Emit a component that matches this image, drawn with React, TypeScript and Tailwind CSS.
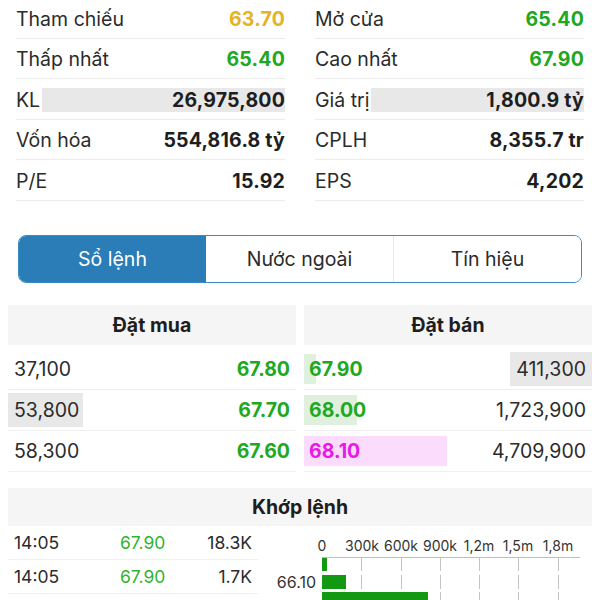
import React from "react";

const FONT = { fontFamily: "Inter, 'Noto Sans', sans-serif" };

type Stat = { label: string; value: string; color?: string; bar?: boolean };

const left: Stat[] = [
  { label: "Tham chiếu", value: "63.70", color: "text-[#e5b225]" },
  { label: "Thấp nhất", value: "65.40", color: "text-[#21a821]" },
  { label: "KL", value: "26,975,800", bar: true },
  { label: "Vốn hóa", value: "554,816.8 tỷ" },
  { label: "P/E", value: "15.92" },
];
const right: Stat[] = [
  { label: "Mở cửa", value: "65.40", color: "text-[#21a821]" },
  { label: "Cao nhất", value: "67.90", color: "text-[#21a821]" },
  { label: "Giá trị", value: "1,800.9 tỷ", bar: true },
  { label: "CPLH", value: "8,355.7 tr" },
  { label: "EPS", value: "4,202" },
];

function StatCol({ items }: { items: Stat[] }) {
  return (
    <div className="flex flex-col">
      {items.map((s) => (
        <div key={s.label} className="flex h-[40.6px] items-center border-b border-[#ececec]">
          <span className="pt-[3px] text-[19.5px] text-[#2b2b2b] whitespace-nowrap">{s.label}</span>
          {s.bar ? (
            <div className="flex-1 ml-[2px] mt-[2px] h-[24px] bg-[#e8e8e8] flex items-center justify-end">
              <span className="pt-[1px] text-[19.5px] font-bold text-[#1e1e1e] tracking-[0.2px]">{s.value}</span>
            </div>
          ) : (
            <span className={`ml-auto pt-[3px] text-[19.5px] font-bold tracking-[0.2px] ${s.color ?? "text-[#1e1e1e]"}`}>
              {s.value}
            </span>
          )}
        </div>
      ))}
    </div>
  );
}

function Chart() {
  const ticks = [91, 131, 170, 209, 248, 288];
  const labels = [
    { x: 52, t: "0" },
    { x: 92, t: "300k" },
    { x: 131, t: "600k" },
    { x: 170, t: "900k" },
    { x: 209, t: "1,2m" },
    { x: 248, t: "1,5m" },
    { x: 288, t: "1,8m" },
  ];
  return (
    <svg width="322" height="74" viewBox="0 0 322 74" className="block">
      {labels.map((l) => (
        <text key={l.t} x={l.x} y={25} textAnchor="middle" fontSize="14" fill="#333" fontFamily="Inter, sans-serif">
          {l.t}
        </text>
      ))}
      <line x1="52" y1="31.5" x2="310" y2="31.5" stroke="#bdbdbd" strokeWidth="1" />
      {ticks.map((x) => (
        <g key={x}>
          <line x1={x + 0.5} y1="32" x2={x + 0.5} y2="45" stroke="#c4c4c4" />
          <line x1={x + 0.5} y1="49" x2={x + 0.5} y2="63" stroke="#c4c4c4" />
          <line x1={x + 0.5} y1="66" x2={x + 0.5} y2="74" stroke="#c4c4c4" />
        </g>
      ))}
      <rect x="52" y="32" width="5" height="13" fill="#129812" />
      <rect x="52" y="49" width="24" height="14" fill="#129812" />
      <rect x="52" y="66" width="106" height="14" fill="#129812" />
      <text x="46" y="62" textAnchor="end" fontSize="16" fill="#333" fontFamily="Inter, sans-serif">
        66.10
      </text>
    </svg>
  );
}

export default function App() {
  const buy = [
    { vol: "37,100", price: "67.80", bar: 0 },
    { vol: "53,800", price: "67.70", bar: 75 },
    { vol: "58,300", price: "67.60", bar: 0 },
  ];
  const sell = [
    { price: "67.90", vol: "411,300", pbar: 12, vbar: 82, pink: false },
    { price: "68.00", vol: "1,723,900", pbar: 53, vbar: 0, pink: false },
    { price: "68.10", vol: "4,709,900", pbar: 143, vbar: 0, pink: true },
  ];
  return (
    <div className="w-[600px] h-[600px] overflow-hidden bg-white" style={FONT}>
      <div className="grid grid-cols-2 gap-[30px] px-4 -mt-[2px]">
        <StatCol items={left} />
        <StatCol items={right} />
      </div>

      <div className="mx-[18px] mt-[34px] h-[48px] flex rounded-[8px] border-[1.5px] border-[#3a8cc2] overflow-hidden">
        <div className="flex-1 bg-[#2b7db8] text-white text-[19.5px] flex items-center justify-center pt-[2px]">Sổ lệnh</div>
        <div className="flex-1 bg-white text-[#2b2b2b] text-[19.5px] flex items-center justify-center pt-[2px] border-r border-[#e6e6e6]">
          Nước ngoài
        </div>
        <div className="flex-1 bg-white text-[#2b2b2b] text-[19.5px] flex items-center justify-center pt-[2px]">Tín hiệu</div>
      </div>

      <div className="mx-2 mt-[22px] grid grid-cols-2 gap-2">
        <div>
          <div className="h-[40px] bg-[#f5f5f5] flex items-center justify-center pt-[2px] text-[19.5px] font-bold text-[#1e1e1e]">
            Đặt mua
          </div>
          <div className="mt-[4px]">
            {buy.map((r) => (
              <div key={r.vol} className="h-[41px] flex items-center border-b border-[#efefef]">
                <div className="relative h-full flex items-center">
                  {r.bar > 0 && <div className="absolute left-0 top-[3px] bottom-[3px] bg-[#e8e8e8]" style={{ width: r.bar }} />}
                  <span className="relative pl-[6px] pt-[2px] text-[19.5px] text-[#2b2b2b]">{r.vol}</span>
                </div>
                <span className="ml-auto pr-[6px] pt-[2px] text-[19.5px] font-bold text-[#21a821]">{r.price}</span>
              </div>
            ))}
          </div>
        </div>
        <div>
          <div className="h-[40px] bg-[#f5f5f5] flex items-center justify-center pt-[2px] text-[19.5px] font-bold text-[#1e1e1e]">
            Đặt bán
          </div>
          <div className="mt-[4px]">
            {sell.map((r) => (
              <div key={r.vol} className="relative h-[41px] flex items-center border-b border-[#efefef]">
                <div
                  className={`absolute left-0 top-[5px] bottom-[5px] ${r.pink ? "bg-[#fcdcfc]" : "bg-[#dff0df]"}`}
                  style={{ width: r.pbar }}
                />
                {r.vbar > 0 && <div className="absolute right-0 top-[3px] bottom-[3px] bg-[#e8e8e8]" style={{ width: r.vbar }} />}
                <span className={`relative pl-[5px] pt-[2px] text-[19.5px] font-bold ${r.pink ? "text-[#e619e6]" : "text-[#21a821]"}`}>
                  {r.price}
                </span>
                <span className="relative ml-auto pr-[6px] pt-[2px] text-[19.5px] text-[#2b2b2b]">{r.vol}</span>
              </div>
            ))}
          </div>
        </div>
      </div>

      <div className="mx-2 mt-[16px] h-[38px] bg-[#f5f5f5] flex items-center justify-center pt-[2px] text-[19.5px] font-bold text-[#1e1e1e]">
        Khớp lệnh
      </div>
      <div className="mx-2 flex">
        <div className="w-[250px]">
          {[{ v: "18.3K" }, { v: "1.7K" }].map((r, i) => (
            <div key={i} className="h-[34px] flex items-center border-b border-[#efefef] pt-[2px] text-[17.5px]">
              <span className="pl-[6px] w-[112px] text-[#2b2b2b]">14:05</span>
              <span className="text-[#2fb42f]">67.90</span>
              <span className="ml-auto pr-[6px] text-[#2b2b2b]">{r.v}</span>
            </div>
          ))}
        </div>
        <div className="ml-[12px]">
          <Chart />
        </div>
      </div>
    </div>
  );
}
